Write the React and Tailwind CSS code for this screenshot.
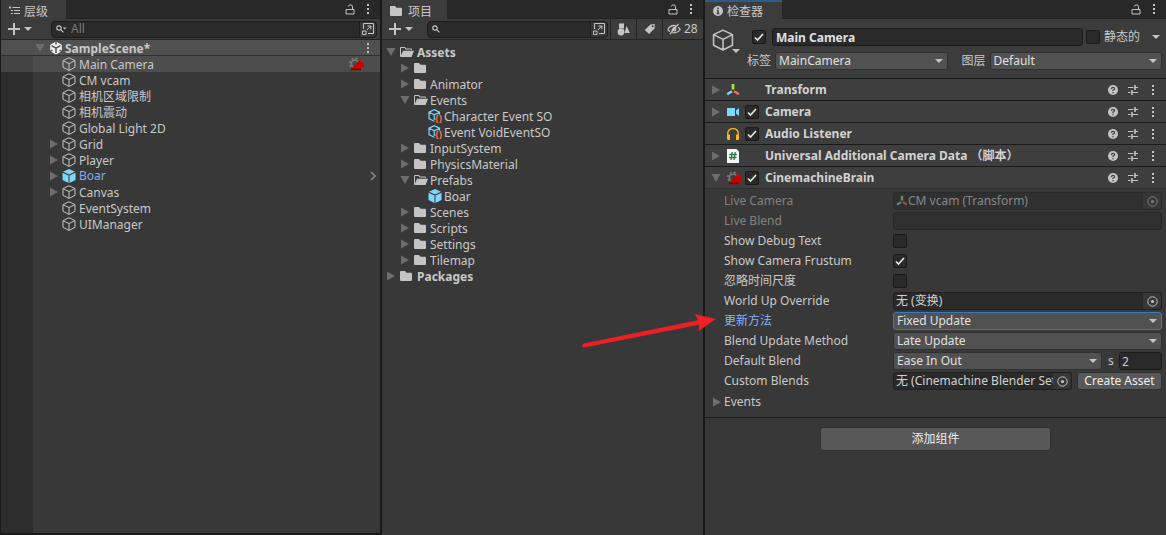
import { useId } from 'react';

const hierarchy = [
  { name: 'CM vcam' },
  { name: '相机区域限制' },
  { name: '相机震动' },
  { name: 'Global Light 2D' },
  { name: 'Grid', caret: true },
  { name: 'Player', caret: true },
  { name: 'Boar', caret: true, prefab: true },
  { name: 'Canvas', caret: true },
  { name: 'EventSystem' },
  { name: 'UIManager' },
];

const project = [
  { name: 'Assets', depth: 0, open: true, bold: true },
  { name: '', depth: 1 },
  { name: 'Animator', depth: 1 },
  { name: 'Events', depth: 1, open: true },
  { name: 'Character Event SO', depth: 2, icon: 'asset' },
  { name: 'Event VoidEventSO', depth: 2, icon: 'asset' },
  { name: 'InputSystem', depth: 1 },
  { name: 'PhysicsMaterial', depth: 1 },
  { name: 'Prefabs', depth: 1, open: true },
  { name: 'Boar', depth: 2, icon: 'prefab' },
  { name: 'Scenes', depth: 1 },
  { name: 'Scripts', depth: 1 },
  { name: 'Settings', depth: 1 },
  { name: 'Tilemap', depth: 1 },
  { name: 'Packages', depth: 0, bold: true },
];

const indents = ['pl-1', 'pl-[18px]', 'pl-8'];

/* ---------- icons ---------- */

function Triangle({ open }) {
  return (
    <svg viewBox="0 0 10 10" className="w-[10px] h-[10px] shrink-0 fill-[#6d6d6d]">
      <path d={open ? 'M0.5 1h9L5 9z' : 'M1 0.5v9L9 5z'} />
    </svg>
  );
}

function DownCaret({ className = '' }) {
  return (
    <svg viewBox="0 0 8 4" className={`w-2 h-1 shrink-0 fill-[#c4c4c4] ${className}`}>
      <path d="M0 0h8L4 4z" />
    </svg>
  );
}

function Cube({ className = 'w-[14px] h-[14px]' }) {
  return (
    <svg viewBox="0 0 14 14" className={`shrink-0 fill-none stroke-[#c4c4c4] ${className}`} strokeLinejoin="round">
      <path d="M7 0.7L13 3.6V10.3L7 13.4L1 10.3V3.6zM1 3.6L7 6.6L13 3.6M7 6.6V13.4" />
    </svg>
  );
}

function PrefabCube() {
  return (
    <svg viewBox="0 0 14 14" className="w-[14px] h-[14px] shrink-0 fill-[#7fd6fd]">
      <path d="M7 0L13 2.8L7 5.6L1 2.8z" />
      <path d="M0.5 3.7L6.5 6.5V14L0.5 11z" />
      <path d="M13.5 3.7L7.5 6.5V14L13.5 11z" />
    </svg>
  );
}

function AssetIcon() {
  return (
    <svg viewBox="0 0 14 14" className="w-[14px] h-[14px] shrink-0 fill-none">
      <path d="M6.5 12L6 12.2L1 9.6V3.2L6.3 0.7L11.5 3.2V5.5M1 3.2L6.3 5.8L11.5 3.2M6.3 5.8V11" stroke="#7fd6fd" strokeWidth="1.2" />
      <path d="M10.3 6.5H9.5Q8.9 6.5 8.9 7.4V9.2L8 10L8.9 10.8V12.6Q8.9 13.5 9.500 13.500H10.300M11.500 6.500H12.200Q12.900 6.500 12.900 7.400V9.200L13.800 10L12.900 10.800V12.600Q12.900 13.500 12.200 13.500H11.500" stroke="#ff6e40" strokeWidth="1.3" />
    </svg>
  );
}

function Folder({ open }) {
  return (
    <svg viewBox="0 0 14 12" className="w-[14px] h-3 shrink-0 fill-[#c4c4c4]">
      {open ? (
        <path d="M0 10V2Q0 1 1 1H5L6.2 2.5H11Q12 2.5 12 3.5V4H11V3.5H5.7L4.5 2H1V9.5L3 4.8H14L11.6 11H1Q0 11 0 10z" />
      ) : (
        <path d="M0 10V2Q0 1 1 1H5L6.5 2.8H11Q12 2.8 12 3.8V10Q12 11 11 11H1Q0 11 0 10z" />
      )}
    </svg>
  );
}

function UnityLogo() {
  return (
    <svg viewBox="0 0 14 14" className="w-[14px] h-[14px] shrink-0">
      <path d="M7 0.5L12.8 3.7V10.3L7 13.5L1.2 10.3V3.7z" fill="#f2f2f2" />
      <path d="M7 7.2V12M7 7.2L2.6 4.7M7 7.2L11.4 4.7" stroke="#505050" strokeWidth="1.5" />
      <path d="M7 0V3.6M0.6 10.8L3.6 9.1M13.4 10.8L10.4 9.1" stroke="#505050" strokeWidth="1.4" />
    </svg>
  );
}

function CinemachineIcon() {
  return (
    <svg viewBox="0 0 16 14" className="w-4 h-[14px] shrink-0">
      <circle cx="7" cy="6.5" r="3.6" fill="none" stroke="#7c7c7c" strokeWidth="1.5" />
      <circle cx="7" cy="6.5" r="5.200" fill="none" stroke="#7c7c7c" strokeWidth="1.6" strokeDasharray="2 2.08" />
      <path d="M2.5 12.5L12.800 1.800V6L13.800 5.200H15.500V10.500H13.800L13 10V13H2.500z" fill="#cc0000" />
      <path d="M2.500 13.300V12.300L3.500 11.500H13V13.300z" fill="#820000" />
    </svg>
  );
}

function Lock() {
  return (
    <svg viewBox="0 0 10 11" className="w-[10px] h-[11px] fill-none stroke-[#c4c4c4]">
      <path d="M1 5.5H9V10H1zM7.5 5.5V2.6Q7.5 1 6 1H5Q3.5 1 3.3 2.5" />
    </svg>
  );
}

function Dots() {
  return (
    <svg viewBox="0 0 4 10" className="w-1 h-[10px] fill-[#c4c4c4]">
      <path d="M1 0h2v2H1zM1 4h2v2H1zM1 8h2v2H1z" />
    </svg>
  );
}

function Plus() {
  return (
    <svg viewBox="0 0 12 12" className="w-3 h-3 shrink-0 stroke-[#c4c4c4]" strokeWidth="2">
      <path d="M6 0V12M0 6H12" />
    </svg>
  );
}

function Magnifier({ caret }) {
  return (
    <svg viewBox="0 0 11 8" className="w-[11px] h-2 shrink-0 fill-none stroke-[#c4c4c4]" strokeWidth="1.2">
      <circle cx="3" cy="3" r="2.2" />
      <path d="M4.6 4.6L7.4 7.4" />
      {caret && <path d="M6.8 2.6H10.6L8.7 4.6z" fill="#c4c4c4" stroke="none" />}
    </svg>
  );
}

function Popout() {
  return (
    <svg viewBox="0 0 12 12" className="w-3 h-3 fill-none stroke-[#c4c4c4]">
      <path d="M1.5 6V0.5H11.5V10.5H6M0.5 8H4V11.5H0.5zM4.8 7L8.6 3.2M5.6 3H8.9V6.3" />
    </svg>
  );
}

function HelpIcon() {
  return (
    <svg viewBox="0 0 10 10" className="w-[10px] h-[10px]">
      <circle cx="5" cy="5" r="5" fill="#c4c4c4" />
      <path d="M3.4 3.9Q3.4 2.4 5 2.4Q6.6 2.4 6.6 3.7Q6.6 4.5 5 5.1V6.1M5 7V8.2" fill="none" stroke="#3e3e3e" strokeWidth="1.2" />
    </svg>
  );
}

function PresetIcon() {
  return (
    <svg viewBox="0 0 10 10" className="w-[10px] h-[10px] fill-none stroke-[#c4c4c4]">
      <path d="M0 2.5H5.5M7 2.5H10M0 7.5H2.5M4 7.5H10" />
      <path d="M7 0V5M4 5V10" strokeWidth="1.6" />
    </svg>
  );
}

function TransformIcon({ className = 'w-[14px] h-[14px]' }) {
  return (
    <svg viewBox="0 0 14 14" className={`shrink-0 ${className}`} strokeWidth="2.4">
      <path d="M7 1V6.5" stroke="#a8e04c" strokeWidth="2.8" />
      <path d="M6 8.2L1.2 11.2" stroke="#7fd6fd" />
      <path d="M8 8.2L12.8 11.2" stroke="#ff6e40" />
    </svg>
  );
}

function CameraIcon() {
  return (
    <svg viewBox="0 0 14 14" className="w-[14px] h-[14px] fill-[#7fd6fd]">
      <path d="M1 3H9V11H1zM10 5.5L13 3V11L10 8.5z" />
    </svg>
  );
}

function AudioIcon() {
  return (
    <svg viewBox="0 0 14 14" className="w-[14px] h-[14px]">
      <path d="M1.8 9V6Q2.3 1.6 7 1.6Q11.7 1.6 12.2 6V9" fill="none" stroke="#fcb813" strokeWidth="1.4" />
      <path d="M1 7.5H4V13H2Q1 12.5 1 11.5zM13 7.5H10V13H12Q13 12.5 13 11.5z" fill="#fcb813" />
    </svg>
  );
}

function ScriptIcon() {
  return (
    <svg viewBox="0 0 14 14" className="w-[14px] h-[14px]">
      <path d="M1 0H10.5L13 2.5V14H1z" fill="#f5f5f5" />
      <path d="M6.2 3L5 11M9.2 3L8 11M3.3 5.5H10.8M3 8.5H10.5" stroke="#2a7a3a" strokeWidth="1.3" />
    </svg>
  );
}

function TargetIcon() {
  return (
    <svg viewBox="0 0 11 11" className="w-[11px] h-[11px]">
      <circle cx="5.5" cy="5.5" r="4.7" fill="none" stroke="#c4c4c4" />
      <circle cx="5.5" cy="5.5" r="1.6" fill="#c4c4c4" />
    </svg>
  );
}

function ListIcon() {
  return (
    <svg viewBox="0 0 11 9" className="w-[11px] h-[9px] stroke-[#c4c4c4]">
      <path d="M0 1.5H2M3.5 1.5H11M2 4.5H4M5 4.5H11M2 7.5H4M5 7.5H11M1 0V3" />
    </svg>
  );
}

function InfoIcon() {
  return (
    <svg viewBox="0 0 10 10" className="w-[10px] h-[10px]">
      <circle cx="5" cy="5" r="5" fill="#c4c4c4" />
      <path d="M4.2 1.6H5.8V3.2H4.2zM3.7 4.2H5.8V7.2H6.5V8.2H3.5V7.2H4.3V5.1H3.7z" fill="#3c3c3c" />
    </svg>
  );
}

/* ---------- shared pieces ---------- */

function TabBar({ icon, title, active }) {
  return (
    <div className="flex h-[19px] bg-[#282828]">
      <div
        className={`flex items-center gap-1 px-2 border-t-2 bg-[#3c3c3c] ${
          active ? 'w-[77px] border-[#2c5d87]' : 'w-[65px] border-[#3c3c3c]'
        }`}
      >
        {icon}
        <h2 className="pt-[2px] whitespace-nowrap">{title}</h2>
      </div>
      <div className="flex flex-1 items-center justify-end gap-[11px] pr-[10px] border-b border-[#232323]">
        <button aria-label="Lock"><Lock /></button>
        <button aria-label="More"><Dots /></button>
      </div>
    </div>
  );
}

function SearchBox({ caret, placeholder }) {
  return (
    <div className="flex flex-1 min-w-0 h-[17px] items-center rounded border border-[#1c1c1c] bg-[#2a2a2a] pl-1">
      <Magnifier caret={caret} />
      <input
        type="text"
        aria-label="Search"
        placeholder={placeholder}
        className="flex-1 min-w-0 h-4 pl-1 bg-transparent outline-none placeholder:text-[#7b7b7b]"
      />
      <button aria-label="Open search" className="flex h-full w-[17px] items-center justify-center border-l border-[#1c1c1c] bg-[#383838] rounded-r">
        <Popout />
      </button>
    </div>
  );
}

function AddButton() {
  return (
    <button aria-label="Create" className="flex items-center gap-1">
      <Plus />
      <DownCaret />
    </button>
  );
}

function Checkbox({ id, checked, label }) {
  return (
    <span className="relative flex w-[14px] h-[14px] shrink-0">
      <input
        id={id}
        type="checkbox"
        aria-label={label}
        defaultChecked={checked}
        className="peer appearance-none w-full h-full rounded-xs border border-[#191919] bg-[#2a2a2a]"
      />
      <svg viewBox="0 0 14 14" className="absolute inset-0 hidden peer-checked:block pointer-events-none fill-none stroke-[#e6e6e6]" strokeWidth="1.7">
        <path d="M3 7.5L5.5 10L11 4" />
      </svg>
    </span>
  );
}

function Dropdown({ id, value, focus }) {
  return (
    <span className="relative flex flex-1 min-w-0 items-center">
      <select
        id={id}
        className={`appearance-none w-full h-[18px] pl-[3px] pr-5 rounded-[3px] border bg-[#515151] text-[#e0e0e0] outline-none ${
          focus ? 'border-[#3a79bb]' : 'border-[#303030]'
        }`}
      >
        <option>{value}</option>
      </select>
      <DownCaret className="absolute right-[5px] pointer-events-none" />
    </span>
  );
}

function ObjectField({ id, value, icon }) {
  return (
    <span className="flex flex-1 min-w-0 h-[18px] items-center rounded-[3px] border border-[#202020] bg-[#2a2a2a] pl-[2px]">
      {icon}
      <input id={id} readOnly value={value} className="flex-1 min-w-0 h-4 bg-transparent outline-none text-[#d2d2d2]" />
      <button aria-label="Pick object" className="flex w-[18px] h-full items-center justify-center bg-[#373737] rounded-r">
        <TargetIcon />
      </button>
    </span>
  );
}

function Property({ label, render, disabled, highlight }) {
  const id = useId();
  return (
    <div className={`flex h-5 items-center ${disabled ? 'opacity-50' : ''}`}>
      <div className="relative w-[169px] shrink-0">
        <label htmlFor={id} className={highlight ? 'text-[#81b4ff]' : ''}>{label}</label>
        {highlight && (
          <svg viewBox="0 0 136 36" className="absolute z-10 right-full top-0 mr-2 w-[136px] h-9 max-w-none pointer-events-none fill-[#ee2024]">
            <path d="M3.800 30.500Q1.500 31.500 2.500 33.500Q3.500 35 5.500 34.300L119 11.800L118.500 18L136 6L115 1L118 7.200z" />
          </svg>
        )}
      </div>
      {render(id)}
    </div>
  );
}

function ComponentHeader({ title, icon, checked, open, noCaret }) {
  return (
    <div className="flex h-[22px] items-center border-t border-[#1a1a1a] bg-[#3e3e3e] pl-[6px] pr-[11px]">
      <span className="w-[10px]">{!noCaret && <Triangle open={open} />}</span>
      <span className="flex w-[18px] ml-[5px] shrink-0">{icon}</span>
      <span className="w-[14px] ml-[1px] mr-[6px]">{checked && <Checkbox checked label={title} />}</span>
      <h3 className="flex-1 font-bold whitespace-nowrap text-[#d2d2d2]">{title}</h3>
      <div className="flex items-center gap-[10px]">
        <button aria-label="Help"><HelpIcon /></button>
        <button aria-label="Presets"><PresetIcon /></button>
        <button aria-label="More" className="ml-[3px]"><Dots /></button>
      </div>
    </div>
  );
}

/* ---------- panels ---------- */

function HierarchyPanel() {
  return (
    <section className="flex flex-col min-w-0 border-l border-r-2 border-b-2 border-l-[#1a1a1a] border-r-[#191919] border-b-[#191919]">
      <TabBar icon={<ListIcon />} title="层级" />
      <div className="flex h-[21px] items-center gap-[19px] border-b border-[#232323] bg-[#3c3c3c] pl-[7px] pr-[3px]">
        <AddButton />
        <SearchBox caret placeholder="All" />
      </div>
      <div className="flex h-4 items-center bg-[#505050] pl-[34px] pr-[10px] border-b border-[#303030]">
        <Triangle open />
        <span className="ml-1 flex"><UnityLogo /></span>
        <span className="ml-[2px] pt-[2px] flex-1 font-bold">SampleScene*</span>
        <button aria-label="Scene menu"><Dots /></button>
      </div>
      <div className="flex h-4">
        <div className="w-8 bg-[#444444]" />
        <div className="flex flex-1 items-center bg-[#4d4d4d] pl-[29px] pr-4">
          <Cube />
          <span className="ml-[3px] pt-[2px] flex-1">Main Camera</span>
          <CinemachineIcon />
        </div>
      </div>
      <div className="flex flex-1">
        <div className="w-8 bg-[#2d2d2d]" />
        <ul className="flex-1">
          {hierarchy.map((item) => (
            <li key={item.name} className="flex h-4 items-center pl-4 pr-[3px]">
              <span className="w-[13px]">{item.caret && <Triangle />}</span>
              {item.prefab ? <PrefabCube /> : <Cube />}
              <span className={`ml-[3px] flex-1 ${item.prefab ? 'text-[#7fabf0]' : 'pt-[2px]'}`}>{item.name}</span>
              {item.prefab && (
                <svg viewBox="0 0 8 10" className="w-2 h-[10px] fill-none stroke-[#8a8a8a]" strokeWidth="1.5">
                  <path d="M2 1L6 5L2 9" />
                </svg>
              )}
            </li>
          ))}
        </ul>
      </div>
    </section>
  );
}

function ProjectIcon({ item }) {
  if (item.icon === 'asset') return <AssetIcon />;
  if (item.icon === 'prefab') return <PrefabCube />;
  return <Folder open={item.open} />;
}

function ProjectPanel() {
  return (
    <section className="flex flex-col min-w-0 border-r-2 border-[#191919]">
      <TabBar icon={<Folder />} title="项目" />
      <div className="flex h-[21px] items-center border-b border-[#232323] bg-[#3c3c3c] pl-[7px]">
        <AddButton />
        <div className="flex flex-1 min-w-0 ml-[14px] mr-[2px]"><SearchBox /></div>
        <button aria-label="Filter by type" className="flex h-full w-[26px] items-center justify-center border-l border-[#232323]">
          <svg viewBox="0 0 13 13" className="w-[13px] h-[13px] fill-[#c4c4c4]">
            <path d="M2 0.5H7V5.5H2zM9.5 3L13 10H7.5z" />
            <circle cx="4" cy="9" r="3.4" />
          </svg>
        </button>
        <button aria-label="Filter by label" className="flex h-full w-[26px] items-center justify-center border-l border-[#232323]">
          <svg viewBox="0 0 12 12" className="w-3 h-3">
            <path d="M0.8 7L6.5 1.5L10.8 1L10.5 5.5L5 11z" fill="#c4c4c4" />
            <circle cx="8.7" cy="3.3" r="1" fill="#3c3c3c" />
          </svg>
        </button>
        <button className="flex h-full w-[41px] items-center gap-[3px] pl-1 border-l border-[#232323]">
          <svg viewBox="0 0 14 12" className="w-[14px] h-3 fill-none stroke-[#c4c4c4]" strokeWidth="1.3">
            <path d="M0.8 6.5Q3 2.5 7 2.5Q8 2.5 9 2.9M11.2 4.2Q12.5 5.2 13.2 6.5Q11 9.8 7 9.8L5.5 9.6M3 8.6Q1.5 7.6 0.8 6.5M11.5 0.8L3 11.2M7.5 4L4.5 7.6M9 5.5Q9 7.5 7 8" />
          </svg>
          28
        </button>
      </div>
      <ul className="pt-1">
        {project.map((item, i) => (
          <li key={i} className={`flex h-4 items-center ${indents[item.depth]} ${item.bold ? 'font-bold' : ''}`}>
            <span className="w-[14px]">{!item.icon && <Triangle open={item.open} />}</span>
            <ProjectIcon item={item} />
            <span className={`pt-[2px] ${item.bold ? 'ml-[3px]' : 'ml-[2px]'}`}>{item.name}</span>
          </li>
        ))}
      </ul>
    </section>
  );
}

function InspectorPanel() {
  return (
    <section className="min-w-0">
      <TabBar icon={<InfoIcon />} title="检查器" active />
      <div className="flex h-[59px] bg-[#3c3c3c] pl-[7px] pr-1 pt-[9px]">
        <button aria-label="Object icon" className="flex h-6 w-[27px] items-end mt-px">
          <Cube className="w-[22px] h-[22px] mb-[2px]" />
          <DownCaret className="-ml-[2px]" />
        </button>
        <div className="flex flex-1 min-w-0 flex-col gap-[6px] pl-2">
          <div className="flex h-[18px] items-center pl-[5px]">
            <Checkbox checked label="Active" />
            <input
              type="text"
              aria-label="Name"
              defaultValue="Main Camera"
              className="ml-[6px] mr-[3px] flex-1 min-w-0 h-[18px] rounded-[3px] border border-[#1a1a1a] bg-[#2a2a2a] pl-[3px] font-bold text-[#e0e0e0] outline-none"
            />
            <Checkbox id="static" />
            <label htmlFor="static" className="ml-1 w-12">静态的</label>
            <DownCaret className="mr-[2px]" />
          </div>
          <div className="flex items-center">
            <label htmlFor="tag" className="w-7">标签</label>
            <Dropdown id="tag" value="MainCamera" />
            <label htmlFor="layer" className="w-7 ml-[14px]">图层</label>
            <Dropdown id="layer" value="Default" />
          </div>
        </div>
      </div>

      <ComponentHeader title="Transform" icon={<TransformIcon />} />
      <ComponentHeader title="Camera" icon={<CameraIcon />} checked />
      <ComponentHeader title="Audio Listener" icon={<AudioIcon />} checked noCaret />
      <ComponentHeader title="Universal Additional Camera Data （脚本）" icon={<ScriptIcon />} />
      <ComponentHeader title="CinemachineBrain" icon={<CinemachineIcon />} checked open />

      <div className="border-t border-[#303030] pl-[19px] pr-1 pt-[2px] pb-[5px]">
        <Property
          disabled
          label="Live Camera"
          render={(id) => <ObjectField id={id} value="CM vcam (Transform)" icon={<TransformIcon className="w-3 h-3" />} />}
        />
        <Property
          disabled
          label="Live Blend"
          render={(id) => <input id={id} type="text" disabled className="flex-1 min-w-0 h-[18px] rounded-[3px] border border-[#1a1a1a] bg-[#2a2a2a]" />}
        />
        <Property label="Show Debug Text" render={(id) => <Checkbox id={id} />} />
        <Property label="Show Camera Frustum" render={(id) => <Checkbox id={id} checked />} />
        <Property label="忽略时间尺度" render={(id) => <Checkbox id={id} />} />
        <Property label="World Up Override" render={(id) => <ObjectField id={id} value="无 (变换)" />} />
        <Property highlight label="更新方法" render={(id) => <Dropdown id={id} value="Fixed Update" focus />} />
        <Property label="Blend Update Method" render={(id) => <Dropdown id={id} value="Late Update" />} />
        <Property
          label="Default Blend"
          render={(id) => (
            <>
              <Dropdown id={id} value="Ease In Out" />
              <label htmlFor="blend-time" className="ml-[6px] w-[11px]">s</label>
              <input
                id="blend-time"
                type="text"
                defaultValue="2"
                className="w-[43px] h-[18px] rounded-[3px] border border-[#1a1a1a] bg-[#2a2a2a] pl-[2px] outline-none"
              />
            </>
          )}
        />
        <Property
          label="Custom Blends"
          render={(id) => (
            <>
              <ObjectField id={id} value="无 (Cinemachine Blender Settings)" />
              <button className="ml-[5px] w-[85px] h-[18px] rounded-[3px] border border-[#303030] bg-[#585858] text-[#eeeeee] whitespace-nowrap">
                Create Asset
              </button>
            </>
          )}
        />
        <button className="flex h-5 items-center gap-[2px] mt-px -ml-3">
          <Triangle />
          Events
        </button>
      </div>

      <div className="flex justify-center border-t border-[#1a1a1a] pt-[9px]">
        <button className="w-1/2 h-6 rounded-[3px] border border-[#303030] bg-[#585858] text-[#eeeeee]">添加组件</button>
      </div>
    </section>
  );
}

export default function App() {
  return (
    <main className="grid min-h-screen grid-cols-[minmax(0,382fr)_minmax(0,323fr)_minmax(0,461fr)] bg-[#383838] font-['Noto_Sans','Noto_Sans_CJK_SC',sans-serif] text-xs leading-4 text-[#c8c8c8]">
      <HierarchyPanel />
      <ProjectPanel />
      <InspectorPanel />
    </main>
  );
}
